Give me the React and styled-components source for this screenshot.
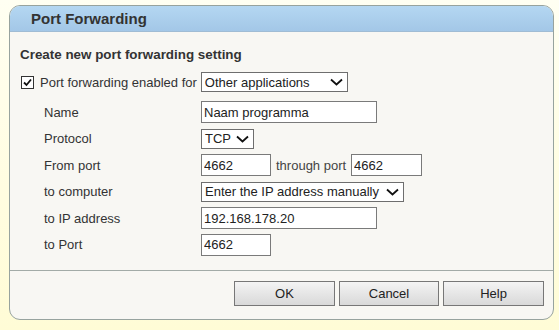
import React from "react";
import styled, { createGlobalStyle } from "styled-components";

const Global = createGlobalStyle`
  html, body { margin: 0; padding: 0; }
  body {
    width: 559px;
    height: 330px;
    overflow: hidden;
    background: linear-gradient(180deg, #fffff2 0%, #fffde0 60%, #fffcd6 100%);
    font-family: "Liberation Sans", Arial, sans-serif;
    color: #333;
  }
`;

const Page = styled.div`
  padding: 5px 0 0 9px;
`;

const Panel = styled.div`
  width: 543px;
  height: 313px;
  border: 1px solid #97a39e;
  border-radius: 11px;
  background: #f8f7f3;
  display: flex;
  flex-direction: column;
  overflow: hidden;
`;

const Header = styled.div`
  height: 25px;
  flex: none;
  background: linear-gradient(180deg, #b4d7f2 0%, #a3c7e7 100%);
  border-bottom: 1px solid #a0bcd4;
  display: flex;
  align-items: center;
  padding-left: 21px;
  font-size: 15px;
  font-weight: bold;
  color: #333;
`;

const Body = styled.div`
  flex: 1;
  padding: 15px 0 0 10px;
  display: flex;
  flex-direction: column;
`;

const SubTitle = styled.div`
  font-size: 13.4px;
  font-weight: bold;
  height: 15px;
  line-height: 15px;
`;

const EnableRow = styled.div`
  display: flex;
  align-items: center;
  margin-top: 10px;
  height: 20px;
  font-size: 13px;
`;

const Check = styled.span`
  width: 11px;
  height: 11px;
  border: 1px solid #333;
  background: #fff;
  display: inline-flex;
  align-items: center;
  justify-content: center;
  margin: 0 6px 0 1px;
`;

const EnableLabel = styled.span`
  margin-right: 4px;
`;

const Form = styled.div`
  display: grid;
  grid-template-columns: 157px auto;
  grid-auto-rows: 26.5px;
  margin: 7px 0 0 24px;
  align-items: center;
  font-size: 13px;
`;

const Label = styled.div`
  font-size: 13px;
`;

const Controls = styled.div`
  display: flex;
  align-items: center;
`;

const TextInput = styled.input`
  box-sizing: border-box;
  width: ${(p) => p.$w}px;
  height: 22px;
  border: 1px solid #7a7a7a;
  background: #fff;
  font-family: "Liberation Sans", Arial, sans-serif;
  font-size: 13px;
  color: #222;
  padding: 0 2px;
  margin: 0;
  outline: none;
`;

const Select = styled.div`
  box-sizing: border-box;
  width: ${(p) => p.$w}px;
  height: 20px;
  border: 1px solid #6e6e6e;
  background: #fff;
  display: flex;
  align-items: center;
  justify-content: space-between;
  padding: 0 4px 0 3px;
  font-size: 13px;
  color: #222;
`;

const Between = styled.span`
  margin: 0 5px;
  color: #444;
`;

const Footer = styled.div`
  border-top: 1px solid #a3aba7;
  height: 49px;
  flex: none;
  display: flex;
  justify-content: flex-end;
  align-items: flex-start;
  padding: 10px 9px 0 0;
  box-sizing: border-box;
  gap: 4px;
`;

const Button = styled.button`
  width: ${(p) => p.$w}px;
  height: 25px;
  border: 1px solid #777;
  border-radius: 0;
  background: linear-gradient(180deg, #f4f4f4 0%, #e6e6e6 50%, #d9d9d9 100%);
  font-family: "Liberation Sans", Arial, sans-serif;
  font-size: 13px;
  color: #222;
  padding: 0;
  margin: 0;
`;

const Chevron = () => (
  <svg width="13" height="8" viewBox="0 0 13 8">
    <path d="M1 1.5 L6.5 6.5 L12 1.5" fill="none" stroke="#111" strokeWidth="1.8" />
  </svg>
);

const Tick = () => (
  <svg width="11" height="11" viewBox="0 0 11 11">
    <path d="M2 5.5 L4.5 8 L9 2.5" fill="none" stroke="#111" strokeWidth="1.8" />
  </svg>
);

export default function App() {
  return (
    <>
      <Global />
      <Page>
        <Panel>
          <Header>Port Forwarding</Header>
          <Body>
            <SubTitle>Create new port forwarding setting</SubTitle>
            <EnableRow>
              <Check>
                <Tick />
              </Check>
              <EnableLabel>Port forwarding enabled for</EnableLabel>
              <Select $w={147}>
                <span>Other applications</span>
                <Chevron />
              </Select>
            </EnableRow>
            <Form>
              <Label>Name</Label>
              <Controls>
                <TextInput $w={176} defaultValue="Naam programma" />
              </Controls>
              <Label>Protocol</Label>
              <Controls>
                <Select $w={53}>
                  <span>TCP</span>
                  <Chevron />
                </Select>
              </Controls>
              <Label>From port</Label>
              <Controls>
                <TextInput $w={70} defaultValue="4662" />
                <Between>through port</Between>
                <TextInput $w={71} defaultValue="4662" />
              </Controls>
              <Label>to computer</Label>
              <Controls>
                <Select $w={203}>
                  <span>Enter the IP address manually</span>
                  <Chevron />
                </Select>
              </Controls>
              <Label>to IP address</Label>
              <Controls>
                <TextInput $w={176} defaultValue="192.168.178.20" />
              </Controls>
              <Label>to Port</Label>
              <Controls>
                <TextInput $w={70} defaultValue="4662" />
              </Controls>
            </Form>
          </Body>
          <Footer>
            <Button $w={101}>OK</Button>
            <Button $w={100}>Cancel</Button>
            <Button $w={101}>Help</Button>
          </Footer>
        </Panel>
      </Page>
    </>
  );
}
